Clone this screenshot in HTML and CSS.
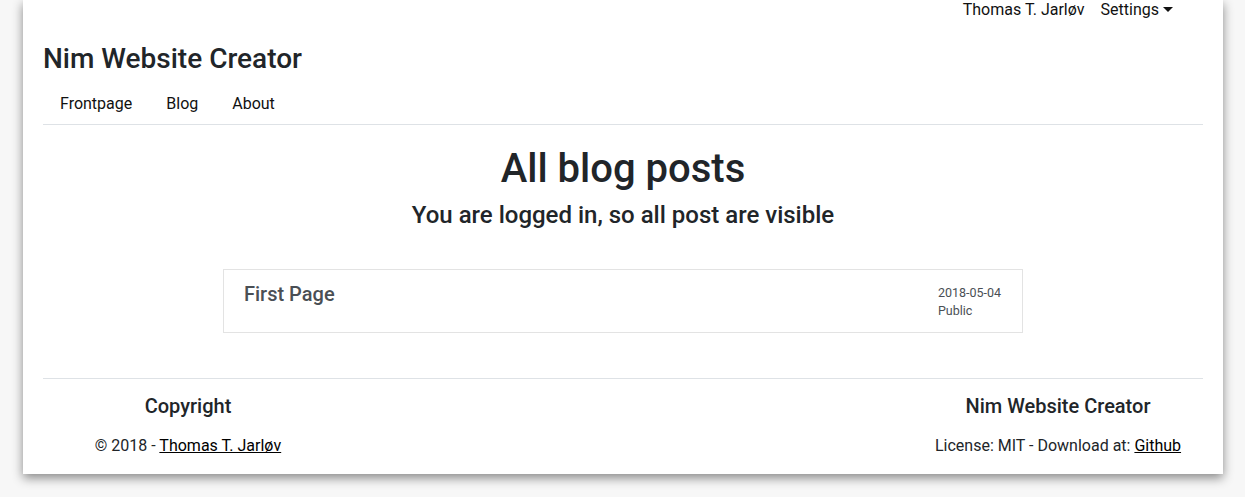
FILE: index.html
```html
<!DOCTYPE html>
<html lang="en">
<head>
<meta charset="utf-8">
<title>Nim Website Creator - Blog</title>
<link rel="stylesheet" href="styles.css">
</head>
<body>
<div class="page">
  <div class="topbar">
    <a class="top-link" href="#">Thomas T. Jarløv</a>
    <a class="top-link dropdown" href="#">Settings<span class="caret"></span></a>
  </div>
  <div class="brand">Nim Website Creator</div>
  <nav class="mainnav">
    <a class="nav-link" href="#">Frontpage</a>
    <a class="nav-link" href="#">Blog</a>
    <a class="nav-link" href="#">About</a>
  </nav>
  <main class="content">
    <h1 class="page-title">All blog posts</h1>
    <h2 class="page-sub">You are logged in, so all post are visible</h2>
    <div class="post-list">
      <div class="post-card">
        <div class="post-title">First Page</div>
        <div class="post-meta">
          <div>2018-05-04</div>
          <div>Public</div>
        </div>
      </div>
    </div>
  </main>
  <footer class="footer">
    <div class="footer-col">
      <div class="footer-head">Copyright</div>
      <div class="footer-text">© 2018 - <a href="#">Thomas T. Jarløv</a></div>
    </div>
    <div></div>
    <div class="footer-col">
      <div class="footer-head">Nim Website Creator</div>
      <div class="footer-text">License: MIT - Download at: <a href="#">Github</a></div>
    </div>
  </footer>
</div>
</body>
</html>
```
FILE: styles.css
```css
* { box-sizing: border-box; }
html, body { margin: 0; padding: 0; }
body {
  background: #f7f7f7;
  font-family: Roboto, "Liberation Sans", sans-serif;
  color: #212529;
  font-size: 16px;
  padding-bottom: 24px;
}
a { color: inherit; text-decoration: none; }
.page {
  width: 1200px;
  margin: 0 0 0 23px;
  background: #fff;
  padding: 0 20px 16px;
  box-shadow: 0 4px 10px rgba(0,0,0,0.45);
}
.topbar {
  display: flex;
  justify-content: flex-end;
  gap: 16px;
  padding-right: 30px;
  height: 20px;
  line-height: 20px;
}
.top-link { color: #111; }
.caret {
  display: inline-block;
  margin-left: 4px;
  vertical-align: 3px;
  border-top: 5px solid #111;
  border-left: 5px solid transparent;
  border-right: 5px solid transparent;
}
.brand {
  margin-top: 22px;
  font-size: 28px;
  font-weight: 500;
  line-height: 34px;
}
.mainnav {
  display: flex;
  padding: 16px 0 8px;
  line-height: 24px;
  border-bottom: 1px solid #dee2e6;
}
.nav-link { padding: 0 17px; color: #111; }
.content { text-align: center; }
.page-title {
  margin: 20px 0 0;
  font-size: 40px;
  font-weight: 500;
  line-height: 48px;
}
.page-sub {
  margin: 8px 0 0;
  font-size: 24px;
  font-weight: 500;
  line-height: 29px;
}
.post-list {
  display: flex;
  justify-content: center;
  margin-top: 39px;
}
.post-card {
  width: 800px;
  display: flex;
  justify-content: space-between;
  text-align: left;
  border: 1px solid #e3e3e3;
  padding: 12px 21px 12px 20px;
}
.post-title {
  font-size: 20px;
  font-weight: 500;
  line-height: 24px;
  color: #4a4f55;
}
.post-meta {
  padding-top: 2px;
  font-size: 12.5px;
  line-height: 18px;
  color: #4a4f55;
}
.footer {
  margin-top: 45px;
  border-top: 1px solid #dee2e6;
  display: grid;
  grid-template-columns: 290px 1fr 290px;
  padding-top: 15px;
  text-align: center;
}
.footer-head {
  font-size: 20px;
  font-weight: 500;
  line-height: 24px;
}
.footer-text {
  margin-top: 16px;
  line-height: 24px;
}
.footer-text a { color: #000; text-decoration: underline; }
```
